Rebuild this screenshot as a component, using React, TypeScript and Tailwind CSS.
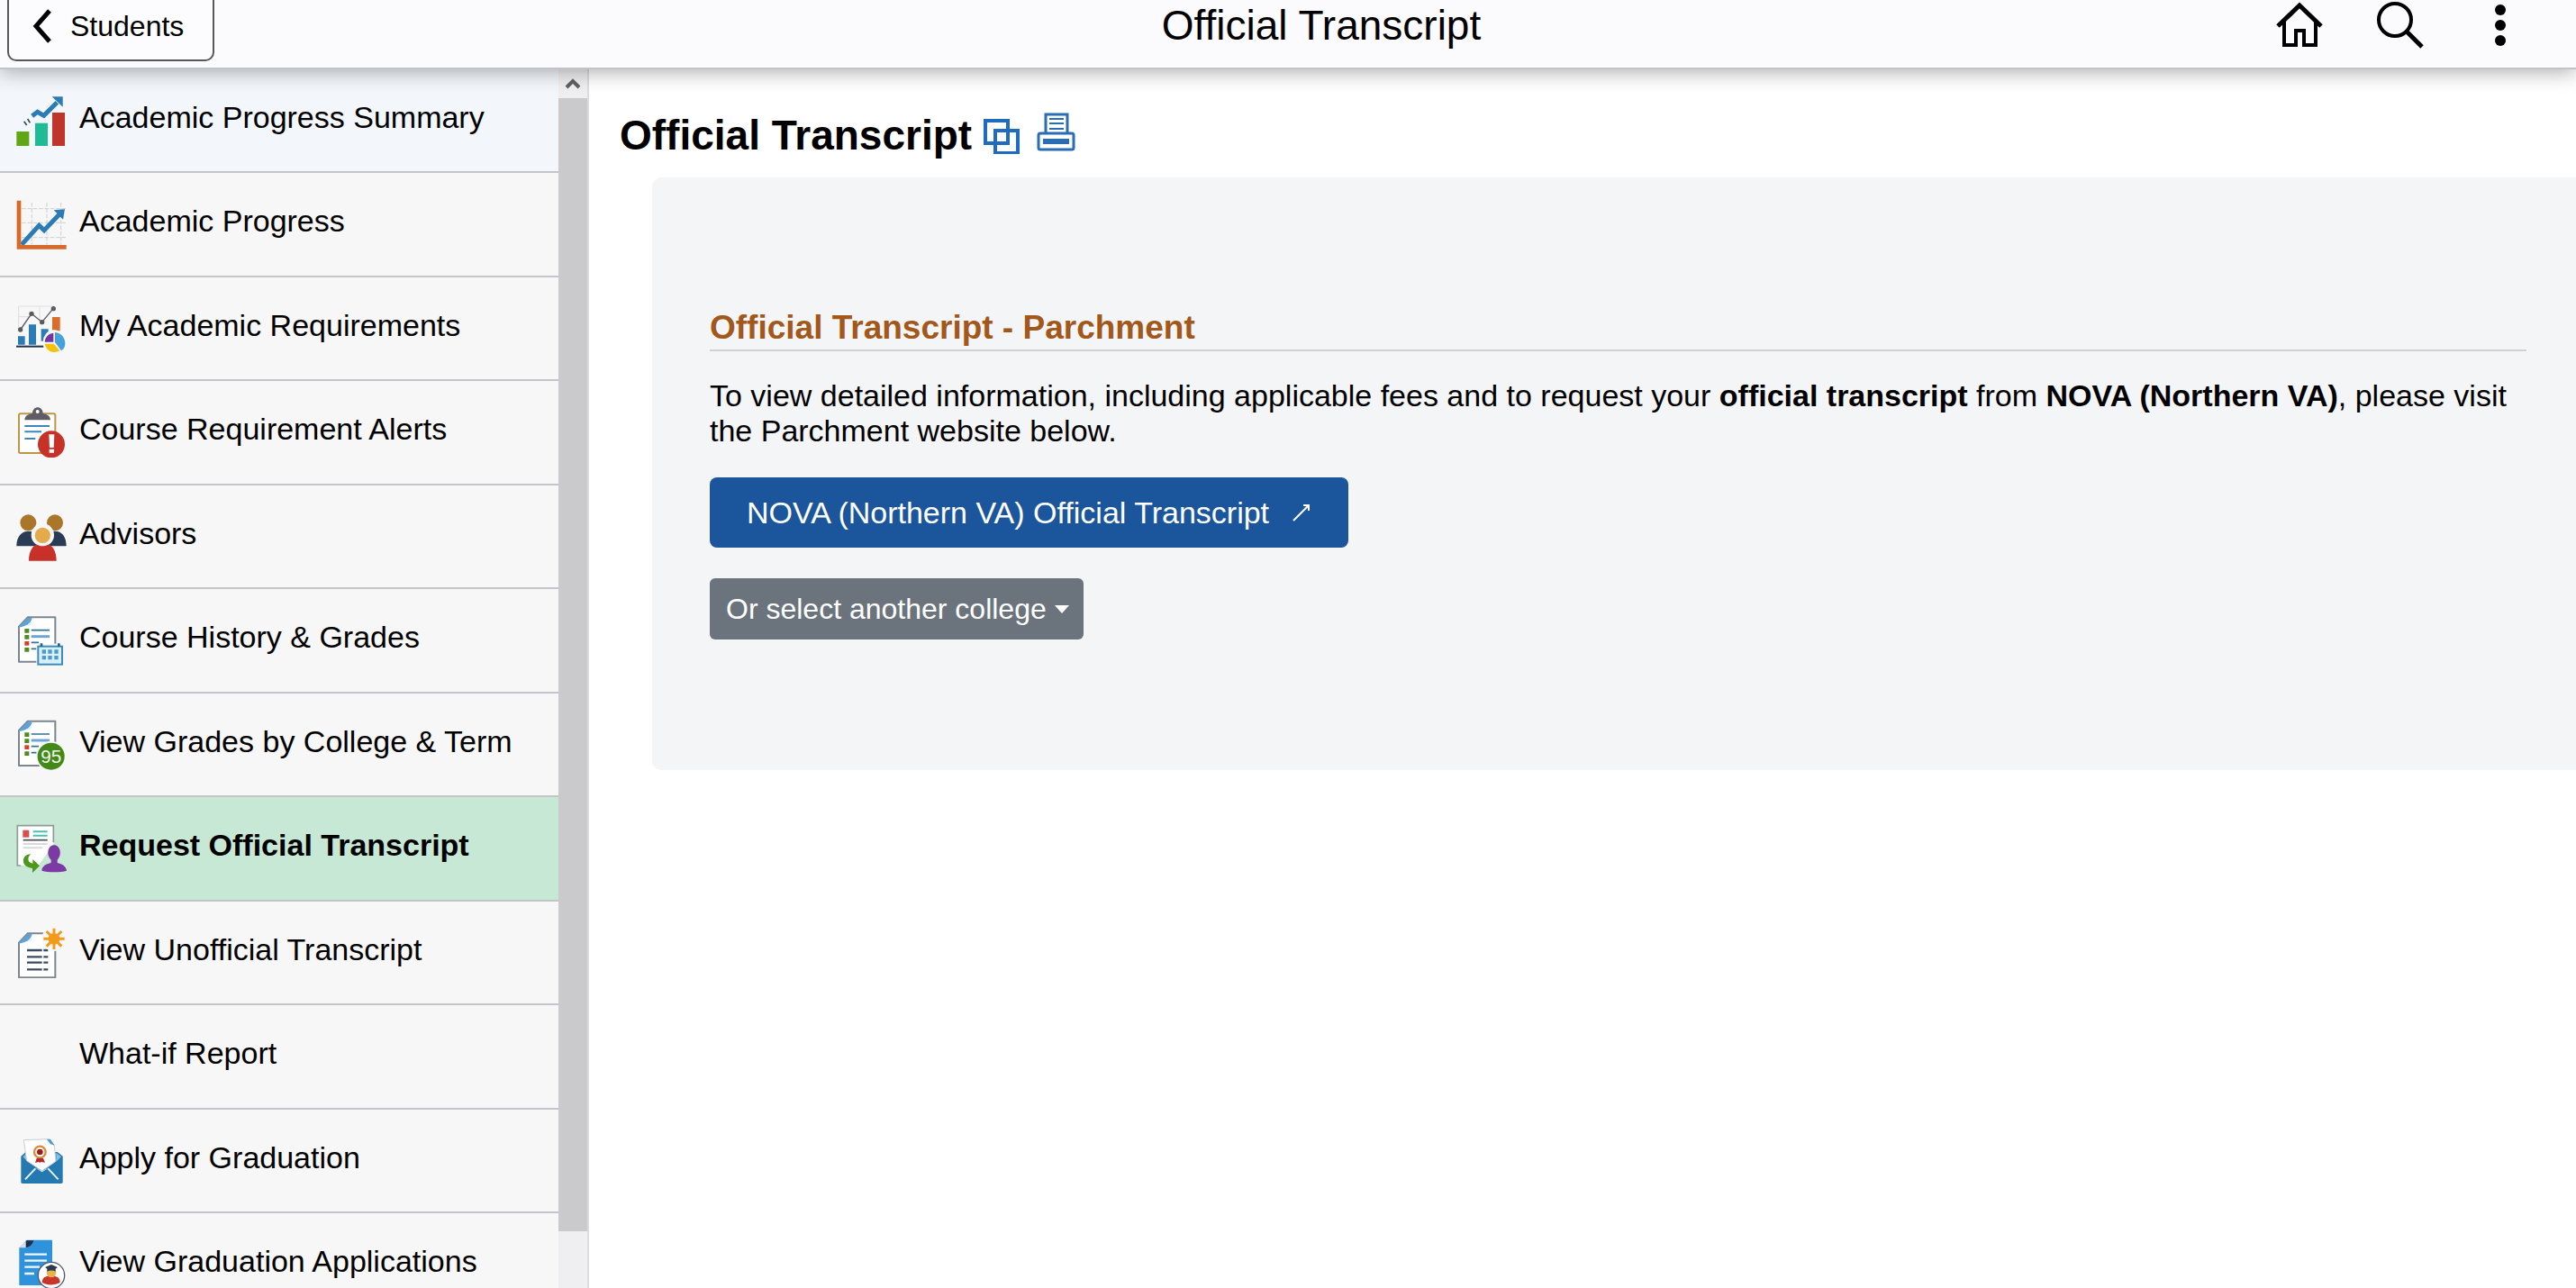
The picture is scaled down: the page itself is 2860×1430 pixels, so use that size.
import type { ReactNode } from "react";

function Icon({ box, children }: { box: string; children: ReactNode }) {
  return (
    <svg viewBox={box} className="size-[56px] shrink-0" fill="none" aria-hidden="true">
      {children}
    </svg>
  );
}

const SummaryIcon = (
  <Icon box="54 74 168 168">
    <path fill="#5fa716" d="M55 194h42v48H55z" />
    <path fill="#1fbb95" d="M117 166h42v76h-42z" />
    <path fill="#c0352b" d="M174 131h42v111h-42z" />
    <path stroke="#2b7bb5" strokeWidth="15" d="M107 142l18-13 21 12 44-44" />
    <path fill="#2b7bb5" d="M173 78h36v34z" />
    <path stroke="#3b4a5e" strokeWidth="5" d="M80 160l9 13M92 152l8 13" />
  </Icon>
);

const ProgressIcon = (
  <Icon box="54 420 168 168">
    <path stroke="#cfcfd4" strokeWidth="3" strokeDasharray="14 5" d="M106 432v140M156 432v140M203 432v140M72 452h148M72 499h148M72 548h148" />
    <path stroke="#2b7bb5" strokeWidth="15" d="M72 572l58-64 17 16 50-52" />
    <path fill="#2b7bb5" d="M179 457l37-3-6 34z" />
    <path stroke="#d66a28" strokeWidth="14" d="M63 425v155h158" />
  </Icon>
);

const RequirementsIcon = (
  <Icon box="54 764 168 168">
    <path stroke="#dedee2" strokeWidth="3" d="M62 848v-75h120M62 808h36M132 775v50" />
    <path fill="#2b7bb5" d="M60 873h23v28H60zM96 834h24v67H96zM137 849h24v40h-24z" />
    <path fill="#db6d2a" d="M174 809h26v46h-26z" />
    <path stroke="#5b5b62" strokeWidth="4" d="M68 851l37-53 35 28 37-45" />
    <g fill="#5b5b62">
      <circle cx="68" cy="851" r="8" />
      <circle cx="105" cy="798" r="8" />
      <circle cx="140" cy="826" r="8" />
      <circle cx="178" cy="781" r="8" />
    </g>
    <path stroke="#20324a" strokeWidth="6" d="M54 907h92" />
    <path fill="#f7f7f7" d="M144 893a36 36 0 0 1 74-8 36 36 0 0 1-74 20z" />
    <path fill="#7136a0" d="M178 892h-29c1-16 12-28 29-30z" />
    <path fill="#46a2dd" d="M183 860c26 1 38 27 33 46-2 8-8 12-12 15l-21-28z" />
    <path fill="#f3c30c" d="M149 898h30l20 23c-22 13-45 0-50-23z" />
  </Icon>
);

const AlertsIcon = (
  <Icon box="54 63 168 168">
    <rect x="63" y="85" width="121" height="131" rx="5" fill="#fff" stroke="#c09548" strokeWidth="6" />
    <path fill="#5e5d66" d="M82 106c0-12 9-19 26-22 0-27 35-27 35 0 16 3 25 10 25 22z" />
    <circle cx="125" cy="78" r="6" fill="#fff" />
    <path stroke="#3d86b8" strokeWidth="6" d="M82 126h83M82 145h56M82 168h36" />
    <circle cx="171" cy="187" r="45" fill="#c63228" />
    <path fill="#fff" d="M163 154h18l-2 44h-14zM164 203h16v12h-16z" />
  </Icon>
);

const AdvisorsIcon = (
  <Icon box="54 409 168 168">
    <circle cx="94" cy="446" r="27" fill="#a9762a" />
    <circle cx="183" cy="446" r="27" fill="#a9762a" />
    <path fill="#2a3c55" d="M55 524c0-32 17-50 40-50s39 18 39 50zM143 524c0-32 17-50 40-50s38 18 38 50z" />
    <circle cx="142" cy="487" r="38" fill="#f7f7f7" />
    <circle cx="142" cy="488" r="26" fill="#e3ab4c" />
    <path fill="#c8302a" d="M96 573c0-35 16-54 28-54 11 6 25 6 36 0 12 0 28 19 28 54z" />
  </Icon>
);

function GradeSheet() {
  return (
    <>
      <path fill="#fff" stroke="#7d868f" strokeWidth="6" strokeLinejoin="round" d="M92 59h92v148H63V90z" />
      <path fill="#5ca2d6" d="M63 90l30-30 14 2c-4 18-20 27-44 31z" />
      <path fill="#d8ebf7" d="M76 93c14-4 24-10 28-24v15z" />
      <path fill="#508b1d" d="M82 97h15v14H82zM82 118h15v14H82zM82 160h15v14H82z" />
      <path fill="#d4402f" d="M82 139h15v14H82z" />
      <path stroke="#2f7398" strokeWidth="5" d="M104 102h61M104 143h25M104 164h18" />
      <path stroke="#6aa7d6" strokeWidth="9" d="M104 123h61" />
    </>
  );
}

const HistoryIcon = (
  <Icon box="54 52 168 168">
    <GradeSheet />
    <rect x="121" y="147" width="94" height="80" fill="#f7f7f7" />
    <rect x="127" y="156" width="80" height="60" fill="#d9f0fb" stroke="#3c8dbd" strokeWidth="6" />
    <path stroke="#235f86" strokeWidth="8" d="M138 146v10M196 146v10" />
    <path fill="#4c9cc8" d="M140 167h13v13h-13zM160 167h13v13h-13zM181 167h13v13h-13zM140 187h13v13h-13zM160 187h13v13h-13zM181 187h13v13h-13z" />
  </Icon>
);

const TermGradesIcon = (
  <Icon box="54 54 168 168">
    <GradeSheet />
    <circle cx="170" cy="176" r="50" fill="#f7f7f7" />
    <circle cx="170" cy="176" r="45" fill="#43891a" />
    <text x="170" y="198" fontSize="62" textAnchor="middle" fill="#f2f8ec" fontFamily="Liberation Sans, sans-serif">
      95
    </text>
  </Icon>
);

const RequestIcon = (
  <Icon box="54 399 168 168">
    <path fill="#fff" d="M58 406h120v64l-50 70H58z" />
    <path stroke="#8f9c96" strokeWidth="5" d="M70 540H58V407h120v56" />
    <path fill="#d8504b" d="M76 422h21v24H76z" />
    <path stroke="#4cc0b4" strokeWidth="6" d="M110 427h48M110 440h48" />
    <path stroke="#4a4a50" strokeWidth="5" d="M77 455h81" />
    <path stroke="#d9d9dd" strokeWidth="6" d="M77 468h81M77 481h65" />
    <path fill="#4d971d" d="M103 502c-32 0-37 43 5 47v15l24-23-23-22v14c-18-2-19-21-6-31z" />
    <path fill="#7c3aa5" d="M139 557c2-18 16-22 31-26v-10c-17-17-11-49 10-49s28 32 11 49v10c14 4 28 8 31 26-20 6-62 6-83 0z" />
  </Icon>
);

const UnofficialIcon = (
  <Icon box="54 746 168 168">
    <path fill="#fff" stroke="#7d868f" strokeWidth="6" strokeLinejoin="round" d="M92 765h92v147H63V796z" />
    <path fill="#5ca2d6" d="M63 796l30-30 14 2c-4 18-20 27-44 31z" />
    <path fill="#d8ebf7" d="M76 797c14-4 24-10 28-24v15z" />
    <path stroke="#3c4c5f" strokeWidth="7" d="M90 821h50M145 821h15M90 843h50M145 843h15M90 862h50M145 862h15M90 885h50M145 885h15" />
    <circle cx="180" cy="783" r="41" fill="#f7f7f7" />
    <circle cx="180" cy="783" r="19" fill="#f39a1c" />
    <path stroke="#f39a1c" strokeWidth="9" d="M180 748v70M145 783h70M155 758l50 50M155 808l50-50" />
  </Icon>
);

const ApplyIcon = (
  <Icon box="54 422 168 168">
    <path fill="#2479b0" d="M70 490l16-14h105l18 14v86q0 5-5 5H75q-5 0-5-5z" />
    <path fill="#7fc0e8" d="M76 492l16-14v30zM204 492l-17-14v30z" />
    <path fill="#fff" stroke="#c9cdd3" strokeWidth="3" d="M79 436l84-3 18 22 5 52-46 32-51-34z" />
    <path fill="#4f9fd1" d="M156 434l12-1 14 21-14-4z" />
    <circle cx="133" cy="476" r="19" stroke="#de8a35" strokeWidth="7" />
    <circle cx="133" cy="476" r="10" fill="#a31621" />
    <path fill="#b32a2a" d="M122 497h22l6 14-14-2-3 3-4-3-12 3z" />
    <path stroke="#e6f1f8" strokeWidth="6" d="M84 567l34-36M194 567l-34-36" />
    <path fill="#e6f1f8" d="M114 526l26 14 26-14-26 17z" />
  </Icon>
);

const GraduationIcon = (
  <Icon box="54 769 168 168">
    <path fill="#2f93dc" d="M90 771h84v151H64V797z" />
    <path fill="#d5e0ea" d="M64 797l26-26v26z" />
    <path fill="#1c2f52" d="M86 773h26c-4 12-10 20-26 24z" />
    <path stroke="#f2f8fd" strokeWidth="7" d="M82 819h74M82 840h74M82 861h50M82 883h32" />
    <circle cx="171" cy="889" r="44" fill="#fff" stroke="#4d5b6b" strokeWidth="4" />
    <path fill="#c9352b" d="M140 913c0-18 12-21 20-22h20c10 2 20 5 20 22-17 10-44 10-60 0z" />
    <circle cx="171" cy="880" r="16" fill="#e6b34d" />
    <path fill="#2c3a4f" d="M150 862l21-9 21 9-7 5v9c-9-5-19-5-28 0v-9z" />
  </Icon>
);

const items: { label: string; icon?: ReactNode; state?: "hover" | "active" }[] = [
  { label: "Academic Progress Summary", icon: SummaryIcon, state: "hover" },
  { label: "Academic Progress", icon: ProgressIcon },
  { label: "My Academic Requirements", icon: RequirementsIcon },
  { label: "Course Requirement Alerts", icon: AlertsIcon },
  { label: "Advisors", icon: AdvisorsIcon },
  { label: "Course History & Grades", icon: HistoryIcon },
  { label: "View Grades by College & Term", icon: TermGradesIcon },
  { label: "Request Official Transcript", icon: RequestIcon, state: "active" },
  { label: "View Unofficial Transcript", icon: UnofficialIcon },
  { label: "What-if Report" },
  { label: "Apply for Graduation", icon: ApplyIcon },
  { label: "View Graduation Applications", icon: GraduationIcon },
];

const rowTone = {
  hover: "bg-[#f3f7fc]",
  active: "bg-[#c6e8d5] font-bold",
  none: "bg-[#f7f7f7]",
};

function Header() {
  return (
    <header className="relative z-10 flex h-[77px] shrink-0 items-start border-b-2 border-[#c2c3c6] bg-[#fbfbfd] shadow-[0_4px_20px_rgba(0,0,0,0.3)]">
      <div className="w-[414px] shrink-0 pl-2">
        <button className="flex h-[68px] w-[230px] items-center gap-[20px] rounded-b-[10px] border-2 border-t-0 border-[#58585c] bg-white/40 pb-[9px] pl-[26px] text-[32px]">
          <svg viewBox="0 0 22 38" className="h-[38px] w-[22px]" fill="none" aria-hidden="true">
            <path d="M19 2L4 19l15 17" stroke="#000" strokeWidth="5" />
          </svg>
          Students
        </button>
      </div>
      <h1 className="flex-1 text-center text-[46px] leading-[56px]">Official Transcript</h1>
      <nav className="flex h-[56px] w-[340px] shrink-0 items-center gap-[58px] pl-[6px]">
        <button aria-label="Home">
          <svg viewBox="0 0 54 56" className="h-[56px] w-[54px]" fill="none" stroke="#000" strokeWidth="4" aria-hidden="true">
            <path d="M3 29L27 6l24 23" strokeWidth="5" />
            <path d="M10 23v27h13V34h9v16h13V23" />
          </svg>
        </button>
        <button aria-label="Search">
          <svg viewBox="0 0 54 56" className="h-[56px] w-[54px]" fill="none" stroke="#000" aria-hidden="true">
            <circle cx="21" cy="22" r="18" strokeWidth="4" />
            <path d="M34 35l17 17" strokeWidth="5" />
          </svg>
        </button>
        <button aria-label="Actions">
          <svg viewBox="0 0 54 56" className="h-[56px] w-[54px]" aria-hidden="true">
            <circle cx="26" cy="11" r="6" />
            <circle cx="26" cy="28" r="6" />
            <circle cx="26" cy="45" r="6" />
          </svg>
        </button>
      </nav>
    </header>
  );
}

function Sidebar() {
  return (
    <aside className="flex w-[654px] shrink-0 overflow-hidden border-r-2 border-[#dcdbe0]">
      <ul className="w-[620px] shrink-0">
        {items.map(({ label, icon, state }) => (
          <li key={label} className="odd:h-[115px] even:h-[116px]">
            <a
              href="#"
              aria-current={state === "active" ? "page" : undefined}
              className={`flex h-full items-center gap-[14px] border-b-2 border-[#c4c5c8] pl-[18px] text-[34px] ${rowTone[state ?? "none"]}`}
            >
              {icon ?? <span className="w-[56px]" />}
              <span className="pb-[8px] leading-10">{label}</span>
            </a>
          </li>
        ))}
      </ul>
      <div className="flex flex-1 flex-col bg-[#efeff1]">
        <button aria-label="Scroll up" className="flex h-8 shrink-0 items-center justify-center">
          <svg viewBox="0 0 18 14" className="h-[14px] w-[18px]" fill="none" aria-hidden="true">
            <path d="M2 11l7-7 7 7" stroke="#606060" strokeWidth="4" />
          </svg>
        </button>
        <div className="flex-[20] bg-[#cacacc]" />
        <div className="flex-1" />
      </div>
    </aside>
  );
}

export default function App() {
  return (
    <div className="flex h-screen flex-col overflow-hidden bg-white font-['Liberation_Sans',Arial,sans-serif] text-black">
      <Header />
      <div className="flex min-h-0 flex-1">
        <Sidebar />
        <main className="min-w-0 flex-1">
          <div className="flex h-[120px] items-center pl-[34px]">
            <h2 className="pt-[26px] text-[46px] leading-[56px] font-bold">Official Transcript</h2>
            <div className="flex gap-[16px] pt-[20px] pl-[12px]">
              <button aria-label="New window">
                <svg viewBox="1091 123 44 48" className="h-[48px] w-[44px]" fill="none" stroke="#1f6bc0" strokeWidth="4" aria-hidden="true">
                  <path d="M1094 134h25v25h-25zM1105 145h25v25h-25z" />
                </svg>
              </button>
              <button aria-label="Print">
                <svg viewBox="1151 123 44 48" className="h-[48px] w-[44px]" fill="none" stroke="#2a6db5" strokeWidth="3" aria-hidden="true">
                  <path d="M1161 147v-20h24v20" />
                  <path d="M1165 132h16M1165 137h16M1165 143h16" strokeWidth="2" />
                  <rect x="1153" y="148" width="39" height="18" rx="2" />
                  <path d="M1158 157h29" strokeWidth="6" />
                </svg>
              </button>
            </div>
          </div>
          <section className="ml-[70px] rounded-l-[10px] bg-[#f4f5f7] py-[145px] pr-[55px] pl-[64px]">
            <h3 className="border-b-2 border-[#d0d1d5] pb-[2px] text-[37px] leading-[44px] font-bold text-[#a2581a]">
              Official Transcript - Parchment
            </h3>
            <p className="mt-[30px] text-[34px] leading-[39px]">
              To view detailed information, including applicable fees and to request your <b>official transcript</b> from{" "}
              <b>NOVA (Northern VA)</b>, please visit the Parchment website below.
            </p>
            <div className="mt-[32px] flex flex-col items-start gap-[34px]">
              <a
                href="#"
                className="flex h-[78px] items-center gap-[26px] rounded-[8px] bg-[#1b559b] pr-[42px] pl-[41px] text-[34px] text-white"
              >
                NOVA (Northern VA) Official Transcript
                <svg viewBox="0 0 20 20" className="size-[20px]" fill="none" stroke="#fff" strokeWidth="2" aria-hidden="true">
                  <path d="M1 19L18 2M12 2h6v6" />
                </svg>
              </a>
              <div className="relative">
                <select
                  aria-label="Or select another college"
                  className="h-[68px] appearance-none rounded-[6px] bg-[#6b747d] pr-[41px] pl-[18px] text-[32px] text-white"
                >
                  <option>Or select another college</option>
                </select>
                <svg viewBox="0 0 16 10" className="pointer-events-none absolute top-[30px] right-[16px] h-[10px] w-[16px]" aria-hidden="true">
                  <path d="M0 0h16L8 9z" fill="#fff" />
                </svg>
              </div>
            </div>
          </section>
        </main>
      </div>
    </div>
  );
}
